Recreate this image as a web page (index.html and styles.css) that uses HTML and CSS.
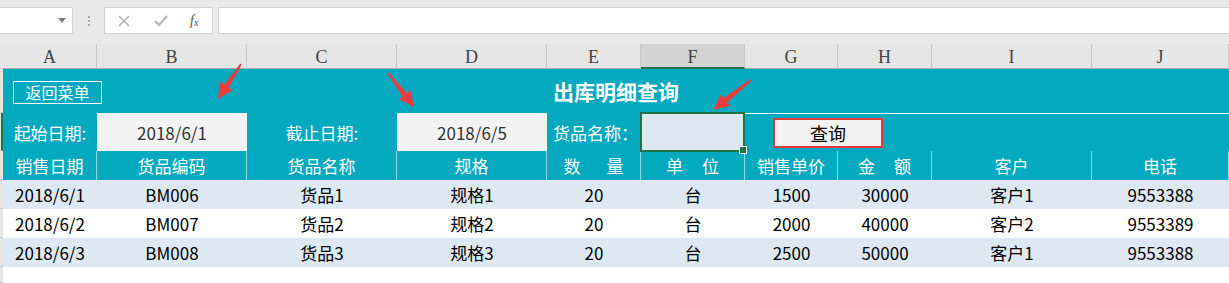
FILE: index.html
```html
<!DOCTYPE html>
<html lang="zh-CN">
<head>
  <meta charset="UTF-8">
  <title>出库明细查询</title>
  <link rel="stylesheet" href="styles.css">
</head>
<body>
  <div class="toolbar">
    <div class="namebox">
      <svg width="8" height="5" viewBox="0 0 8 5"><polygon points="0,0 8,0 4,5" fill="#808080"/></svg>
    </div>
    <div class="grip"><i></i><i></i><i></i></div>
    <div class="fxbox">
      <svg width="12" height="12" viewBox="0 0 12 12"><path d="M1 1 L11 11 M11 1 L1 11" stroke="#b4b4b4" stroke-width="1.6"/></svg>
      <svg width="14" height="12" viewBox="0 0 14 12"><path d="M1 6 L5 10 L13 1" stroke="#b4b4b4" stroke-width="2" fill="none"/></svg>
      <span class="fx">f<sub>x</sub></span>
    </div>
    <div class="formula"></div>
  </div>

  <div class="sheet">
    <!-- column headers -->
    <div class="rh"></div>
    <div class="colhead">A</div>
    <div class="colhead">B</div>
    <div class="colhead">C</div>
    <div class="colhead">D</div>
    <div class="colhead">E</div>
    <div class="colhead sel">F</div>
    <div class="colhead">G</div>
    <div class="colhead">H</div>
    <div class="colhead">I</div>
    <div class="colhead">J</div>

    <!-- row 1 -->
    <div class="rh"></div>
    <div class="title-row">
      <button class="back-btn">返回菜单</button>
      <h1 class="title">出库明细查询</h1>
      <span></span>
    </div>

    <!-- row 2 -->
    <div class="rh active"></div>
    <div class="cell teal">起始日期:</div>
    <div class="cell value">2018/6/1</div>
    <div class="cell teal">截止日期:</div>
    <div class="cell value">2018/6/5</div>
    <div class="cell teal left">货品名称：</div>
    <div class="cell picked"></div>
    <div class="cell teal span2 topline btn-cell"><button class="query-btn">查询</button></div>
    <div class="cell teal span2 topline"></div>

    <!-- row 3 -->
    <div class="rh"></div>
    <div class="cell head">销售日期</div>
    <div class="cell head">货品编码</div>
    <div class="cell head">货品名称</div>
    <div class="cell head">规格</div>
    <div class="cell head sp-wide">数 量</div>
    <div class="cell head sp">单 位</div>
    <div class="cell head">销售单价</div>
    <div class="cell head sp">金 额</div>
    <div class="cell head">客户</div>
    <div class="cell head">电话</div>

    <!-- data -->
    <div class="rh"></div>
    <div class="cell blue">2018/6/1</div>
    <div class="cell blue">BM006</div>
    <div class="cell blue">货品1</div>
    <div class="cell blue">规格1</div>
    <div class="cell blue">20</div>
    <div class="cell blue">台</div>
    <div class="cell blue">1500</div>
    <div class="cell blue">30000</div>
    <div class="cell blue">客户1</div>
    <div class="cell blue">9553388</div>

    <div class="rh"></div>
    <div class="cell">2018/6/2</div>
    <div class="cell">BM007</div>
    <div class="cell">货品2</div>
    <div class="cell">规格2</div>
    <div class="cell">20</div>
    <div class="cell">台</div>
    <div class="cell">2000</div>
    <div class="cell">40000</div>
    <div class="cell">客户2</div>
    <div class="cell">9553389</div>

    <div class="rh"></div>
    <div class="cell blue">2018/6/3</div>
    <div class="cell blue">BM008</div>
    <div class="cell blue">货品3</div>
    <div class="cell blue">规格3</div>
    <div class="cell blue">20</div>
    <div class="cell blue">台</div>
    <div class="cell blue">2500</div>
    <div class="cell blue">50000</div>
    <div class="cell blue">客户1</div>
    <div class="cell blue">9553388</div>

    <div class="rh"></div>
  </div>

  <!-- red hint arrows drawn over the sheet -->
  <svg class="arrows" width="1229" height="283" viewBox="0 0 1229 283">
    <g transform="translate(241,64) rotate(123.3)">
      <path d="M0,-0.8 L27,-2.8 L26,-7.5 L42,0 L26,7.5 L27,2.8 L0,0.8 Z" fill="#ef3b3b"/>
    </g>
    <g transform="translate(388,73) rotate(52.6)">
      <path d="M0,-0.8 L28,-2.8 L27,-7.5 L43,0 L27,7.5 L28,2.8 L0,0.8 Z" fill="#ef3b3b"/>
    </g>
    <g transform="translate(751,80) rotate(141.7)">
      <path d="M0,-0.8 L33,-2.8 L32,-7.5 L48,0 L32,7.5 L33,2.8 L0,0.8 Z" fill="#ef3b3b"/>
    </g>
  </svg>
</body>
</html>
```

FILE: styles.css
```css
* {
  margin: 0;
  padding: 0;
  box-sizing: border-box;
}

body {
  font-family: "Noto Sans CJK SC", "Noto Sans", sans-serif;
  background: #fff;
  color: #000;
  width: 1229px;
  height: 283px;
  overflow: hidden;
  position: relative;
}

/* formula bar */
.toolbar {
  height: 44px;
  background: #e9e9e9;
  display: flex;
  align-items: flex-start;
  padding-top: 7px;
}

.namebox {
  width: 73px;
  height: 27px;
  background: #fff;
  border: 1px solid #d2d2d2;
  border-left: none;
  display: flex;
  align-items: center;
  justify-content: flex-end;
  padding-right: 6px;
}

.grip {
  width: 31px;
  height: 27px;
  display: flex;
  flex-direction: column;
  align-items: center;
  justify-content: center;
  gap: 2px;
}

.grip i {
  width: 2px;
  height: 2px;
  background: #a6a6a6;
}

.fxbox {
  width: 109px;
  height: 27px;
  background: #fff;
  border: 1px solid #d2d2d2;
  display: flex;
  align-items: center;
  padding-left: 13px;
  gap: 24px;
}

.fx {
  font-family: "Liberation Serif", serif;
  font-style: italic;
  font-size: 14px;
  color: #555;
  margin-left: -2px;
}

.fx sub {
  font-size: 10px;
  vertical-align: -1px;
}

.formula {
  flex: 1;
  height: 27px;
  margin-left: 5px;
  background: #fff;
  border: 1px solid #d2d2d2;
  border-right: none;
}

/* sheet grid */
.sheet {
  display: grid;
  grid-template-columns: 3px 94px 150px 150px 150px 94px 104px 93px 94px 160px 1fr;
  grid-template-rows: 25px 44px 38px 29px 29px 29px 29px 1fr;
  height: 239px;
}

.rh {
  background: #e6e6e6;
  border-bottom: 1px solid #c8c8c8;
}

.rh.active {
  border-right: 2px solid #217346;
}

.colhead {
  background: #e6e6e6;
  border-right: 1px solid #c8c8c8;
  border-bottom: 1px solid #a8a8a8;
  font-family: "Liberation Serif", serif;
  font-size: 18px;
  color: #444;
  display: flex;
  align-items: center;
  justify-content: center;
  padding-top: 3px;
}

.colhead.sel {
  background: #d3d3d3;
  border-bottom: 2px solid #217346;
}

.title-row {
  grid-column: 2 / -1;
  background: #03a9bf;
  display: grid;
  grid-template-columns: 1fr auto 1fr;
  align-items: center;
}

.back-btn {
  justify-self: start;
  margin-left: 10px;
  margin-top: 2px;
  width: 89px;
  height: 23px;
  background: transparent;
  border: 1px solid #fff;
  color: #fff;
  font-family: inherit;
  font-size: 16px;
  line-height: 1;
}

.title {
  font-size: 21px;
  font-weight: 700;
  color: #fff;
}

.cell {
  display: flex;
  align-items: center;
  justify-content: center;
  font-size: 17px;
  white-space: pre;
}

.cell.teal {
  background: #03a9bf;
  color: #fff;
}

.cell.left {
  justify-content: flex-start;
  padding-left: 6px;
}

.cell.value {
  background: #f2f2f2;
  color: #333;
}

.cell.picked {
  background: #dde8f3;
  border: 2px solid #217346;
  margin: -1px 0 -1px -1px;
  position: relative;
}

.cell.picked::after {
  content: '';
  position: absolute;
  right: -4px;
  bottom: -4px;
  width: 6px;
  height: 6px;
  background: #217346;
  border: 1px solid #fff;
}

.span2 {
  grid-column: span 2;
}

.topline {
  border-top: 1px solid #fff;
}

.btn-cell {
  justify-content: flex-start;
  padding-left: 28px;
}

.query-btn {
  width: 110px;
  height: 30px;
  background: #f2f2f2;
  border: 2px solid #e0393b;
  font-family: inherit;
  font-size: 18px;
  color: #000;
  margin-top: 1px;
}

.cell.head {
  background: #03a9bf;
  color: #fff;
  border-right: 1px solid #8fd9e3;
}

.cell.head:last-child {
  border-right: none;
}

.cell.sp-wide {
  word-spacing: 22px;
}

.cell.sp {
  word-spacing: 15px;
}

.cell.blue {
  background: #dde8f3;
}

.arrows {
  position: absolute;
  top: 0;
  left: 0;
  pointer-events: none;
}
```
